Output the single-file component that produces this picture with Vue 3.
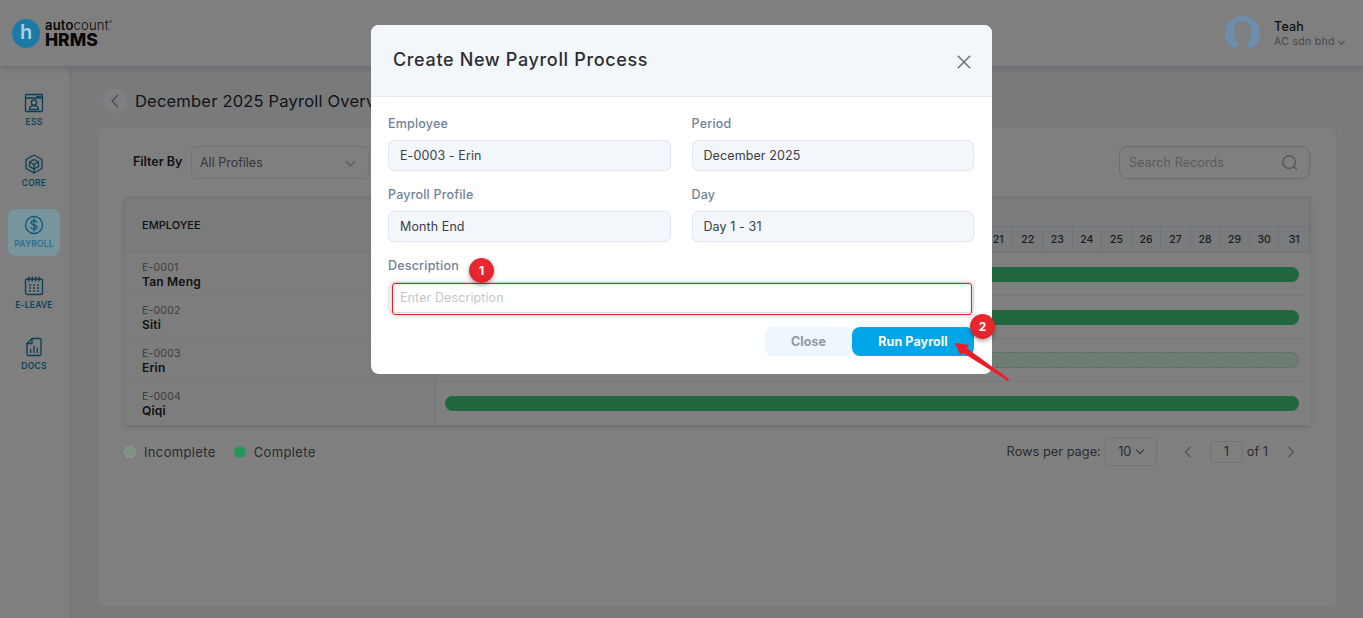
<script setup>
const navItems = [
  { key: 'ess', label: 'ESS' },
  { key: 'core', label: 'CORE' },
  { key: 'payroll', label: 'PAYROLL', active: true },
  { key: 'leave', label: 'E-LEAVE' },
  { key: 'docs', label: 'DOCS' }
];

const days = Array.from({ length: 31 }, (_, i) => i + 1);

const employees = [
  { code: 'E-0001', name: 'Tan Meng', done: true },
  { code: 'E-0002', name: 'Siti', done: true },
  { code: 'E-0003', name: 'Erin', done: false },
  { code: 'E-0004', name: 'Qiqi', done: true }
];
</script>

<template>
  <div class="page">
    <header class="topbar">
      <div class="logo">
        <div class="logo-mark">h</div>
        <div class="logo-text">
          <div class="logo-top"><b>auto</b>count<sup>®</sup></div>
          <div class="logo-bottom">HRMS</div>
        </div>
      </div>
      <div class="user">
        <svg class="avatar" viewBox="0 0 35 35">
          <path d="M6.4 31A17.5 17.5 0 1 1 28.6 31L23.5 31.5 22 27C25 24.5 26 20 26 15 26 8.5 23 4.7 17.5 4.7 12 4.7 9 8.5 9 15 9 20 10 24.5 13 27L11.5 31.5Z" />
        </svg>
        <div class="user-text">
          <div class="user-name">Teah</div>
          <div class="user-company">AC sdn bhd <span class="caret"></span></div>
        </div>
      </div>
    </header>

    <div class="layout">
      <aside class="sidebar">
        <div v-for="item in navItems" :key="item.key" :class="['nav-item', { active: item.active }]">
          <svg v-if="item.key === 'ess'" viewBox="0 0 20 20" class="nav-icon">
            <rect x="1.5" y="1.5" width="17" height="17" rx="1" />
            <path d="M1.5 5h17M12.5 3.3h.8M14.5 3.3h.8M16 3.3h.8" />
            <circle cx="10" cy="9.5" r="2.6" />
            <path d="M5.5 16.5c0-2.5 1.8-3.8 4.5-3.8s4.5 1.3 4.5 3.8z" />
          </svg>
          <svg v-else-if="item.key === 'core'" viewBox="0 0 20 20" class="nav-icon">
            <path d="M10 1l8 4.500v9L10 19l-8-4.500v-9z" />
            <path d="M10 5.500l4.500 2.500v4.500L10 15l-4.500-2.500V8zM5.500 8l4.500 2.500L14.500 8M10 10.500V19" />
          </svg>
          <svg v-else-if="item.key === 'payroll'" viewBox="0 0 20 20" class="nav-icon">
            <circle cx="10" cy="10" r="8.5" />
            <path d="M12.8 7.3c-.4-1-1.500-1.600-2.800-1.600-1.600 0-2.800.9-2.800 2.100 0 2.900 5.700 1.500 5.700 4.400 0 1.300-1.300 2.100-2.900 2.100-1.400 0-2.500-.6-2.900-1.700M10 4v12" />
          </svg>
          <svg v-else-if="item.key === 'leave'" viewBox="0 0 20 20" class="nav-icon">
            <rect x="1.5" y="3" width="17" height="15.5" rx="2" />
            <path d="M5 1v4M8.3 1v4M11.7 1v4M15 1v4" />
            <path d="M5.5 9h1M9.5 9h1M13.5 9h1M5.5 12h1M9.5 12h1M13.5 12h1M5.5 15h1M9.5 15h1M13.5 15h1" />
          </svg>
          <svg v-else viewBox="0 0 20 20" class="nav-icon">
            <path d="M8 1.5h7.500a1.500 1.500 0 0 1 1.500 1.500v14a1.500 1.500 0 0 1-1.500 1.500h-11A1.500 1.500 0 0 1 3 17V6.500z" />
            <path d="M8 1.5v5H3M6.7 15.5v-3M10 15.5v-6M13.3 15.5v-4" />
          </svg>
          <span class="nav-label">{{ item.label }}</span>
        </div>
      </aside>

      <main class="content">
        <div class="page-title">
          <button class="back-btn">
            <svg viewBox="0 0 24 24"><path d="M15 6l-6 6 6 6" /></svg>
          </button>
          <h1>December 2025 Payroll Overview</h1>
        </div>

        <section class="card">
          <div class="filters">
            <label class="filter-label">Filter By</label>
            <div class="select">
              <span>All Profiles</span>
              <span class="select-caret"></span>
            </div>
            <div class="search">
              <span>Search Records</span>
              <svg viewBox="0 0 20 20"><circle cx="9" cy="9" r="7" /><path d="M14 14l4 4" /></svg>
            </div>
          </div>

          <div class="table">
            <div class="thead">
              <div class="emp-head">EMPLOYEE</div>
              <div class="days-head">
                <div class="month-row"></div>
                <div class="day-row">
                  <div v-for="d in days" :key="d" class="day">{{ d }}</div>
                </div>
              </div>
            </div>
            <div v-for="emp in employees" :key="emp.code" class="row">
              <div class="emp-cell">
                <div class="emp-code">{{ emp.code }}</div>
                <div class="emp-name">{{ emp.name }}</div>
              </div>
              <div class="bar-cell">
                <div :class="['bar', { pending: !emp.done }]"></div>
              </div>
            </div>
          </div>

          <div class="table-footer">
            <div class="legend">
              <span class="dot pending"></span><span>Incomplete</span>
              <span class="dot done"></span><span>Complete</span>
            </div>
            <div class="pager">
              <span>Rows per page:</span>
              <div class="rows-select">10 <span class="small-caret"></span></div>
              <svg class="pager-arrow prev" viewBox="0 0 12 16"><path d="M8.5 3l-5 5 5 5" /></svg>
              <div class="page-input">1</div>
              <span>of 1</span>
              <svg class="pager-arrow next" viewBox="0 0 12 16"><path d="M3.5 3l5 5-5 5" /></svg>
            </div>
          </div>
        </section>
      </main>
    </div>

    <div class="overlay">
      <div class="modal">
        <div class="modal-header">
          <h2>Create New Payroll Process</h2>
          <svg class="close-x" viewBox="0 0 14 14"><path d="M.8.8l12.4 12.4M13.2.8L.8 13.2" /></svg>
        </div>
        <div class="modal-body">
          <div class="form-grid">
            <div class="field">
              <label>Employee</label>
              <div class="input">E-0003 - Erin</div>
            </div>
            <div class="field">
              <label>Period</label>
              <div class="input">December 2025</div>
            </div>
            <div class="field">
              <label>Payroll Profile</label>
              <div class="input">Month End</div>
            </div>
            <div class="field">
              <label>Day</label>
              <div class="input">Day 1 - 31</div>
            </div>
          </div>
          <div class="field desc">
            <label>Description</label>
            <div class="input placeholder">Enter Description</div>
          </div>
          <div class="actions">
            <button class="btn-close">Close</button>
            <button class="btn-run">Run Payroll</button>
          </div>
        </div>

        <!-- tutorial annotations -->
        <div class="red-box"></div>
        <div class="badge badge-one">1</div>
        <svg class="arrow" viewBox="0 0 70 50">
          <polygon points="9,8 23,10 20.5,13 63,44 62,46 17,18 14,20" fill="#ee1c25" />
        </svg>
        <div class="badge badge-two">2</div>
      </div>
    </div>
  </div>
</template>

<style>
html,
body {
  margin: 0;
  overflow: hidden;
}
</style>

<style scoped>
.page {
  position: relative;
  z-index: 0;
  height: 618px;
  overflow: hidden;
  display: flex;
  flex-direction: column;
  font-family: Inter, "Liberation Sans", sans-serif;
  color: #1f2328;
  background: #f2f5f9;
}

.topbar {
  height: 66px;
  flex-shrink: 0;
  display: flex;
  align-items: center;
  justify-content: space-between;
  padding: 0 19px 0 12px;
  background: #fff;
  box-shadow: 0 2px 8px rgba(40, 60, 90, 0.22);
  position: relative;
}

.logo {
  display: flex;
  align-items: center;
  gap: 5px;
}

/* these few keep more colour than the scrim would leave them, so they sit above it */
.logo-mark {
  position: relative;
  z-index: 11;
  width: 28px;
  height: 29px;
  border-radius: 50%;
  background: #1c7ba6;
  color: #a9d2e4;
  font-size: 20px;
  font-weight: 600;
  line-height: 27px;
  text-align: center;
}

.logo-text {
  color: #111;
}

.logo-top {
  font-size: 13px;
  line-height: 13px;
  font-weight: 300;
  letter-spacing: 0.2px;
}

.logo-top b {
  font-weight: 600;
}

.logo-top sup {
  font-size: 5px;
  vertical-align: 6px;
  line-height: 0;
}

.logo-bottom {
  font-size: 17.5px;
  line-height: 16px;
  font-weight: 800;
}

.user {
  display: flex;
  align-items: center;
  gap: 14px;
}

.avatar {
  position: relative;
  z-index: 11;
  width: 35px;
  height: 35px;
  fill: #6e8eaf;
}

.user-text {
  padding-top: 2px;
  width: 70px;
}

.user-name {
  font-size: 12.5px;
  font-weight: 500;
  line-height: 16px;
  letter-spacing: 0.2px;
}

.user-company {
  font-size: 10.5px;
  line-height: 14px;
  letter-spacing: 0.3px;
  color: #8e9195;
  display: flex;
  align-items: center;
  gap: 4px;
  white-space: nowrap;
}

.caret {
  flex-shrink: 0;
  width: 4px;
  height: 4px;
  border-right: 1px solid #8e9195;
  border-bottom: 1px solid #8e9195;
  transform: rotate(45deg);
  margin-top: -2px;
}

.layout {
  flex: 1;
  display: flex;
  min-height: 0;
}

.sidebar {
  width: 69px;
  flex-shrink: 0;
  background: #fff;
  box-shadow: 1px 0 4px rgba(40, 60, 90, 0.08);
  padding: 21px 0 0 8px;
  display: flex;
  flex-direction: column;
  box-sizing: border-box;
}

.nav-item {
  width: 52px;
  height: 47px;
  margin-bottom: 14px;
  border-radius: 8px;
  display: flex;
  flex-direction: column;
  align-items: center;
  justify-content: center;
  gap: 4px;
  color: #1d86b6;
}

.nav-item.active {
  position: relative;
  z-index: 11;
  background: #78949d;
  color: #2a6f8d;
}

.nav-icon {
  width: 20px;
  height: 20px;
  fill: none;
  stroke: #137cab;
  stroke-width: 1.3;
  stroke-linecap: round;
  stroke-linejoin: round;
}

.nav-item.active .nav-icon {
  stroke: #0c5a79;
}

.nav-label {
  font-size: 8.5px;
  line-height: 11px;
  font-weight: 600;
  letter-spacing: 0.2px;
}

.content {
  flex: 1;
  min-width: 0;
  display: flex;
  flex-direction: column;
  padding: 23px 26px 11px 28px;
}

.page-title {
  display: flex;
  align-items: center;
  height: 24px;
  gap: 8px;
  margin: 0 0 14px 6px;
}

.back-btn {
  width: 24px;
  height: 24px;
  padding: 0;
  border: none;
  border-radius: 50%;
  background: #fff;
  display: flex;
  align-items: center;
  justify-content: center;
}

.back-btn svg {
  width: 24px;
  height: 24px;
  fill: none;
  stroke: #8a9ab0;
  stroke-width: 1.4;
}

.page-title h1 {
  margin: 0;
  font-size: 16.5px;
  font-weight: 400;
  letter-spacing: 0.2px;
  white-space: nowrap;
  color: #26292d;
}

.card {
  flex: 1;
  background: #fff;
  border: 1px solid #eaeef3;
  border-radius: 6px;
  padding: 18px 26px 0;
  display: flex;
  flex-direction: column;
}

.filters {
  height: 33px;
  display: flex;
  align-items: center;
  margin-bottom: 18px;
}

.filter-label {
  margin: -2px 0 0 9px;
  width: 58px;
  font-size: 12.5px;
  font-weight: 600;
  flex-shrink: 0;
}

.select {
  width: 178px;
  height: 33px;
  box-sizing: border-box;
  border: 1px solid #e2e6ea;
  border-radius: 6px;
  display: flex;
  align-items: center;
  justify-content: space-between;
  padding: 0 14px 0 8px;
  font-size: 12.5px;
  color: #6a6d71;
}

.select-caret {
  width: 6px;
  height: 6px;
  border-right: 1.5px solid #9ea2a6;
  border-bottom: 1.5px solid #9ea2a6;
  transform: rotate(45deg);
  margin-top: -3px;
}

.search {
  margin-left: auto;
  width: 191px;
  height: 33px;
  box-sizing: border-box;
  border: 1px solid #d4d8dc;
  border-radius: 8px;
  display: flex;
  align-items: center;
  justify-content: space-between;
  padding: 0 10px 0 9px;
  font-size: 12.5px;
  letter-spacing: 0.1px;
  color: #b4b7bb;
}

.search svg {
  width: 18px;
  height: 18px;
  fill: none;
  stroke: #9b9ea2;
  stroke-width: 1.3;
}

.table {
  background: #fff;
  box-shadow: 0 2px 5px rgba(40, 60, 90, 0.18);
}

.thead {
  display: flex;
  height: 56px;
  background: #f2f6f9;
  border: 1px solid #dce9f2;
  box-sizing: border-box;
}

.emp-head {
  width: 311px;
  flex-shrink: 0;
  box-sizing: border-box;
  padding: 0 17px;
  display: flex;
  align-items: center;
  font-size: 11px;
  font-weight: 500;
  border-right: 1px solid #dce9f2;
}

.days-head {
  flex: 1;
  min-width: 0;
  display: flex;
  flex-direction: column;
}

.month-row {
  height: 28px;
  border-bottom: 1px solid #dce9f2;
}

.day-row {
  flex: 1;
  display: grid;
  grid-template-columns: repeat(9, 24.8fr) repeat(22, 29.6fr);
}

.day {
  display: flex;
  align-items: center;
  justify-content: center;
  font-size: 10.5px;
  font-weight: 500;
  color: #33373b;
  border-right: 1px solid #dce9f2;
}

.day:last-child {
  border-right: none;
}

.row {
  display: flex;
  height: 43px;
  border-bottom: 1px solid #eef0f2;
  box-sizing: border-box;
}

.row:last-child {
  border-bottom: none;
}

.emp-cell {
  width: 312px;
  flex-shrink: 0;
  box-sizing: border-box;
  padding: 8px 18px 0;
  background: #fafbfc;
  border-right: 1px solid #e5e8ec;
}

.emp-code {
  font-size: 10.5px;
  line-height: 13px;
  letter-spacing: 0.2px;
  color: #777b80;
}

.emp-name {
  font-size: 12px;
  line-height: 16px;
  font-weight: 600;
  letter-spacing: 0.2px;
  color: #22262a;
}

.bar-cell {
  flex: 1;
  min-width: 0;
  display: flex;
  align-items: center;
  padding: 0 11px 0 9px;
}

.bar {
  width: 100%;
  height: 15px;
  border-radius: 8px;
  background: #40cc7c;
}

.bar.pending {
  height: 16px;
  box-sizing: border-box;
  background: #ddfbe9;
  border: 1px dashed #a9dfc0;
}

.table-footer {
  display: flex;
  justify-content: space-between;
  align-items: center;
  margin-top: 12px;
  font-size: 13px;
  color: #55595e;
}

.legend {
  display: flex;
  align-items: center;
  gap: 8px;
  letter-spacing: 0.35px;
}

.dot {
  position: relative;
  z-index: 11;
  width: 12px;
  height: 12px;
  border-radius: 50%;
  box-sizing: border-box;
}

.dot.pending {
  background: #7f9286;
  border: 1px dashed #8fa59a;
}

.dot.done {
  margin-left: 10px;
  background: #22985a;
}

.pager {
  display: flex;
  align-items: center;
  font-size: 12.8px;
}

.rows-select {
  width: 52px;
  height: 29px;
  box-sizing: border-box;
  margin-left: 4px;
  border: 1px solid #e0e5e8;
  border-radius: 5px;
  display: flex;
  align-items: center;
  justify-content: center;
  gap: 6px;
}

.small-caret {
  width: 5px;
  height: 5px;
  border-right: 1.3px solid #55595e;
  border-bottom: 1.3px solid #55595e;
  transform: rotate(45deg);
  margin-top: -3px;
}

.pager-arrow {
  width: 12px;
  height: 16px;
  fill: none;
  stroke: #a5a8ac;
  stroke-width: 1.3;
}

.pager-arrow.prev {
  margin: 0 16px 0 25px;
}

.pager-arrow.next {
  margin: 0 13px 0 17px;
}

.page-input {
  width: 33px;
  height: 22px;
  box-sizing: border-box;
  margin-right: 4px;
  border: 1px solid #e0e5e8;
  border-radius: 4px;
  display: flex;
  align-items: center;
  justify-content: center;
}

.overlay {
  position: absolute;
  inset: 0;
  z-index: 10;
  background: rgba(0, 0, 0, 0.5);
  display: flex;
  justify-content: center;
  align-items: flex-start;
  padding-top: 25px;
}

.modal {
  position: relative;
  width: 621px;
  background: #fff;
  border-radius: 8px;
}

.modal-header {
  height: 72px;
  box-sizing: border-box;
  background: #f3f7fb;
  border-bottom: 1px solid #e6ecf1;
  border-radius: 8px 8px 0 0;
  display: flex;
  align-items: center;
  justify-content: space-between;
  padding: 0 21px 2px 22px;
}

.modal-header h2 {
  margin: 0;
  font-size: 18px;
  font-weight: 500;
  letter-spacing: 0.65px;
  color: #2b2e32;
}

.close-x {
  width: 14px;
  height: 14px;
  margin-top: 4px;
  fill: none;
  stroke: #6c7074;
  stroke-width: 1.5;
}

.modal-body {
  padding: 17px 18px 18px 17px;
}

.form-grid {
  display: grid;
  grid-template-columns: 1fr 1fr;
  gap: 14px 21px;
}

.field label {
  display: block;
  height: 20px;
  margin-bottom: 6px;
  font-size: 12.5px;
  line-height: 20px;
  font-weight: 500;
  letter-spacing: 0.2px;
  color: #6f8299;
}

.field.desc {
  margin-top: 14px;
}

.input {
  height: 31px;
  box-sizing: border-box;
  padding: 0 11px;
  display: flex;
  align-items: center;
  font-size: 12.5px;
  letter-spacing: 0.1px;
  color: #3c4045;
  background: #f3f6fa;
  border: 1px solid #e0e7ee;
  border-radius: 6px;
}

.input.placeholder {
  color: #c3c6ca;
  background: #fff;
}

.actions {
  display: flex;
  justify-content: flex-end;
  margin-top: 14px;
}

.actions button {
  height: 29px;
  border: none;
  border-radius: 8px;
  font-family: inherit;
  font-size: 12.5px;
  font-weight: 700;
  letter-spacing: 0.1px;
  padding: 0;
}

.btn-close {
  width: 87px;
  background: #eef7fd;
  color: #949a9f;
}

.btn-run {
  width: 122px;
  background: #00a6e8;
  color: #fff;
}

.red-box {
  position: absolute;
  left: 21px;
  top: 258px;
  width: 580px;
  height: 32px;
  box-sizing: border-box;
  border: 1.5px solid #ee1c25;
  border-radius: 3px;
  box-shadow: 0 0 5px rgba(0, 0, 0, 0.25), inset 0 0 5px rgba(0, 0, 0, 0.12);
}

.badge {
  position: absolute;
  width: 25px;
  height: 25px;
  border-radius: 50%;
  background: radial-gradient(circle at 50% 40%, #ee2a30, #d9222a);
  color: #fff;
  font-size: 12px;
  font-weight: 700;
  display: flex;
  align-items: center;
  justify-content: center;
  box-shadow: 0 2px 4px rgba(0, 0, 0, 0.35);
}

.badge-one {
  left: 98px;
  top: 233px;
}

.badge-two {
  left: 599px;
  top: 289px;
}

.arrow {
  position: absolute;
  left: 575px;
  top: 310px;
  width: 70px;
  height: 50px;
  overflow: visible;
}
</style>
